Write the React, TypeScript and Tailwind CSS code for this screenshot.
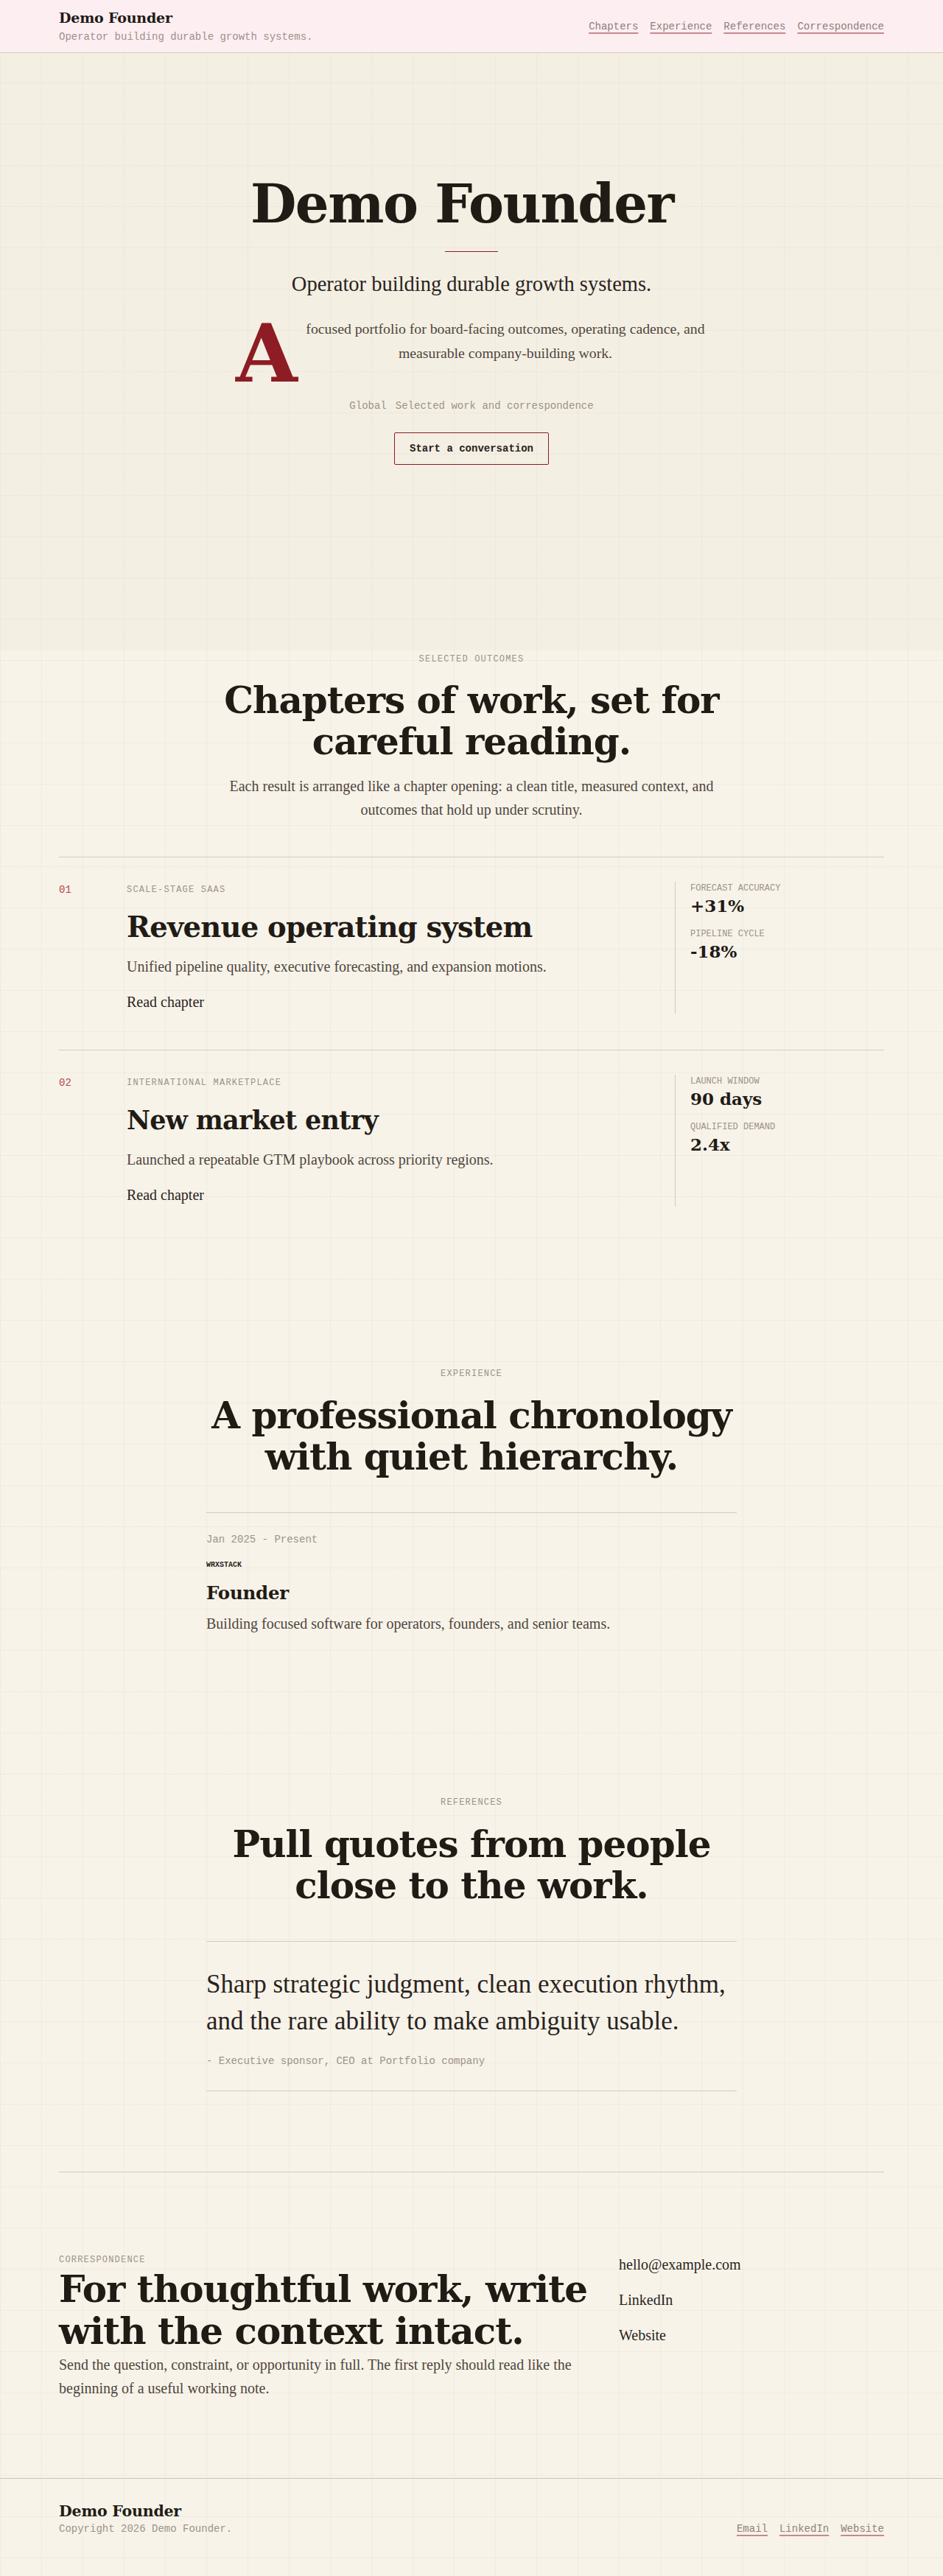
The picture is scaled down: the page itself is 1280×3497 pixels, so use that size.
import React from "react";

const display = "font-['DejaVu_Serif',serif] font-bold";
const body = "font-['Liberation_Serif',serif]";
const mono = "font-['Liberation_Mono',monospace]";

function Eyebrow({ children, className = "" }: { children: React.ReactNode; className?: string }) {
  return (
    <div className={`${mono} text-[12px] uppercase leading-[20px] tracking-[0.1em] text-[#9d928a] ${className}`}>
      {children}
    </div>
  );
}

type Chapter = {
  no: string;
  eyebrow: string;
  title: string;
  titleCls: string;
  desc: string;
  metrics: { label: string; value: string }[];
};

const chapters: Chapter[] = [
  {
    no: "01",
    eyebrow: "Scale-stage SaaS",
    title: "Revenue operating system",
    titleCls: "text-[38.5px]",
    desc: "Unified pipeline quality, executive forecasting, and expansion motions.",
    metrics: [
      { label: "Forecast accuracy", value: "+31%" },
      { label: "Pipeline cycle", value: "-18%" },
    ],
  },
  {
    no: "02",
    eyebrow: "International marketplace",
    title: "New market entry",
    titleCls: "text-[35px]",
    desc: "Launched a repeatable GTM playbook across priority regions.",
    metrics: [
      { label: "Launch window", value: "90 days" },
      { label: "Qualified demand", value: "2.4x" },
    ],
  },
];

function ChapterRow({ c }: { c: Chapter }) {
  return (
    <article className="grid grid-cols-[92px_1fr_284px] border-t border-[#d6cab7] pb-[49px] pt-[33px]">
      <div className={`${mono} mt-[1px] text-[14px] leading-[20px] text-[#b5494f]`}>{c.no}</div>
      <div className="mt-[1px]">
        <Eyebrow>{c.eyebrow}</Eyebrow>
        <h3 className={`${display} mt-[20px] ${c.titleCls} leading-[42px] tracking-[-0.02em] text-[#211b16]`}>{c.title}</h3>
        <p className={`${body} mt-[16px] text-[20px] leading-[32px] text-[#4f463e]`}>{c.desc}</p>
        <a className={`${body} mt-[16px] block text-[20px] leading-[32px] text-[#2a231d]`}>Read chapter</a>
      </div>
      <div className="border-l border-[#d6cab7] pl-[20px]">
        <div className={`${mono} text-[12px] uppercase leading-[18px] text-[#9d928a]`}>{c.metrics[0].label}</div>
        <div className={`${display} text-[23px] leading-[30px] text-[#211b16]`}>{c.metrics[0].value}</div>
        <div className={`${mono} mt-[14px] text-[12px] uppercase leading-[18px] text-[#9d928a]`}>{c.metrics[1].label}</div>
        <div className={`${display} text-[23px] leading-[30px] text-[#211b16]`}>{c.metrics[1].value}</div>
      </div>
    </article>
  );
}

const linkCls = "underline decoration-[#c48a8f] decoration-[1.5px] underline-offset-[4px]";

export default function App() {
  return (
    <div className="min-h-screen bg-[#f7f3e9] bg-[linear-gradient(to_right,rgba(120,100,70,0.055)_1px,transparent_1px),linear-gradient(to_bottom,rgba(120,100,70,0.055)_1px,transparent_1px)] bg-size-[56px_56px] bg-[size:56px_56px] text-[#211b16]">
      {/* Header */}
      <header className="h-[72px] border-b border-[#d9c8ae] bg-[#fdeef2]">
        <div className="mx-auto flex h-full max-w-[1120px] items-center justify-between">
          <div>
            <div className={`${display} text-[19px] leading-[24px] tracking-[-0.01em] text-[#211b16]`}>Demo Founder</div>
            <div className={`${mono} mt-[4px] text-[14px] leading-[20px] text-[#9d918a]`}>
              Operator building durable growth systems.
            </div>
          </div>
          <nav className={`${mono} flex gap-4 text-[14px] leading-[20px] text-[#8f7f79]`}>
            <a className={linkCls}>Chapters</a>
            <a className={linkCls}>Experience</a>
            <a className={linkCls}>References</a>
            <a className={linkCls}>Correspondence</a>
          </nav>
        </div>
      </header>

      {/* Hero */}
      <section className="bg-[rgba(226,214,190,0.13)] pb-[252px] pt-[169px]">
        <div className="mx-auto max-w-[1120px] text-center">
          <h1 className={`${display} pr-[26px] text-[72px] leading-[72px] tracking-[-0.02em] text-[#211b16]`}>Demo Founder</h1>
          <div className="mx-auto mt-[28px] h-px w-[72px] bg-[#8d1c24]" />
          <p className={`${body} mt-[25px] text-[28.5px] leading-[37px] text-[#2a231d]`}>
            Operator building durable growth systems.
          </p>
          <div className="mx-auto mt-[26px] flow-root w-[640px]">
            <span className={`${display} float-left mt-[6px] w-[92px] text-left text-[108px] leading-[89px] text-[#8d1c24]`}>A</span>
            <p className={`${body} text-center text-[19.75px] leading-[33px] text-[#4f463e]`}>
              focused portfolio for board-facing outcomes, operating cadence, and
              <span className="block pl-[39px]">measurable company-building work.</span>
            </p>
          </div>
          <div className={`${mono} mt-[16px] flex justify-center gap-3 text-[14px] leading-[20px] text-[#9d928a]`}>
            <span>Global</span>
            <span>Selected work and correspondence</span>
          </div>
          <a
            className={`${mono} mt-[26px] inline-flex rounded-[2px] border border-[#8d1c24] px-5 py-[11px] text-[14px] font-bold leading-[20px] text-[#2a211c]`}
          >
            Start a conversation
          </a>
        </div>
      </section>

      {/* Selected outcomes */}
      <section className="pt-[2px]">
        <div className="mx-auto max-w-[1120px]">
          <Eyebrow className="text-center">Selected outcomes</Eyebrow>
          <h2 className={`${display} mt-[18px] whitespace-nowrap text-center text-[50px] leading-[56px] tracking-[-0.02em] text-[#211b16]`}>
            Chapters of work, set for
            <br />
            careful reading.
          </h2>
          <p className={`${body} mt-[16px] text-center text-[20px] leading-[32px] text-[#4f463e]`}>
            Each result is arranged like a chapter opening: a clean title, measured context, and
            <br />
            outcomes that hold up under scrutiny.
          </p>
          <div className="mt-[48px]">
            {chapters.map((c) => (
              <ChapterRow key={c.no} c={c} />
            ))}
          </div>
        </div>
      </section>

      {/* Experience */}
      <section className="pt-[168px]">
        <div className="mx-auto max-w-[1120px]">
          <Eyebrow className="text-center">Experience</Eyebrow>
          <h2 className={`${display} mt-[19px] whitespace-nowrap text-center text-[50px] leading-[56px] tracking-[-0.02em] text-[#211b16]`}>
            A professional chronology
            <br />
            with quiet hierarchy.
          </h2>
        </div>
        <div className="mx-auto mt-[47px] max-w-[720px] border-t border-[#d6cab7] pt-[26px]">
          <div className={`${mono} text-[14px] leading-[20px] text-[#9d928a]`}>Jan 2025 - Present</div>
          <div className={`${mono} mt-[18px] text-[10px] font-bold uppercase leading-[14px] text-[#2a231d]`}>Wrxstack</div>
          <h3 className={`${display} mt-[16px] text-[24.5px] leading-[30px] tracking-[-0.01em] text-[#211b16]`}>Founder</h3>
          <p className={`${body} mt-[10px] text-[20px] leading-[32px] text-[#4f463e]`}>
            Building focused software for operators, founders, and senior teams.
          </p>
        </div>
      </section>

      {/* References */}
      <section className="pt-[217px]">
        <div className="mx-auto max-w-[1120px]">
          <Eyebrow className="text-center">References</Eyebrow>
          <h2 className={`${display} mt-[19px] whitespace-nowrap text-center text-[50px] leading-[56px] tracking-[-0.02em] text-[#211b16]`}>
            Pull quotes from people
            <br />
            close to the work.
          </h2>
        </div>
        <div className="mx-auto mt-[47px] max-w-[720px] border-b border-t border-[#d6cab7] pb-[30px] pt-[33px]">
          <blockquote className={`${body} whitespace-nowrap text-[35px] leading-[50px] text-[#2a231d]`}>
            Sharp strategic judgment, clean execution rhythm,
            <br />
            and the rare ability to make ambiguity usable.
          </blockquote>
          <div className={`${mono} mt-[19px] text-[14px] leading-[20px] text-[#9d928a]`}>
            - Executive sponsor, CEO at Portfolio company
          </div>
        </div>
      </section>

      {/* Correspondence */}
      <section className="pt-[109px]">
        <div className="mx-auto max-w-[1120px] border-t border-[#d6cab7] pb-[106px] pt-[109px]">
          <div className="grid grid-cols-[720px_1fr] gap-x-[40px]">
            <div>
              <Eyebrow>Correspondence</Eyebrow>
              <h2 className={`${display} mt-[1px] whitespace-nowrap text-[50px] leading-[57px] tracking-[-0.02em] text-[#211b16]`}>
                For thoughtful work, write
                <br />
                with the context intact.
              </h2>
              <p className={`${body} mt-[1px] text-[20px] leading-[32px] text-[#4f463e]`}>
                Send the question, constraint, or opportunity in full. The first reply should read like the
                <br />
                beginning of a useful working note.
              </p>
            </div>
            <div className={`${body} flex flex-col gap-4 text-[20px] leading-[32px] text-[#2a231d]`}>
              <a>hello@example.com</a>
              <a>LinkedIn</a>
              <a>Website</a>
            </div>
          </div>
        </div>
      </section>

      {/* Footer */}
      <footer className="border-t border-[#cfc2ae]">
        <div className="mx-auto flex max-w-[1120px] items-end justify-between pb-[56px] pt-[30px]">
          <div>
            <div className={`${display} text-[20.5px] leading-[28px] tracking-[-0.01em] text-[#211b16]`}>Demo Founder</div>
            <div className={`${mono} text-[14px] leading-[20px] text-[#9d928a]`}>Copyright 2026 Demo Founder.</div>
          </div>
          <nav className={`${mono} flex gap-4 text-[14px] leading-[20px] text-[#8f7f79]`}>
            <a className={linkCls}>Email</a>
            <a className={linkCls}>LinkedIn</a>
            <a className={linkCls}>Website</a>
          </nav>
        </div>
      </footer>
    </div>
  );
}
